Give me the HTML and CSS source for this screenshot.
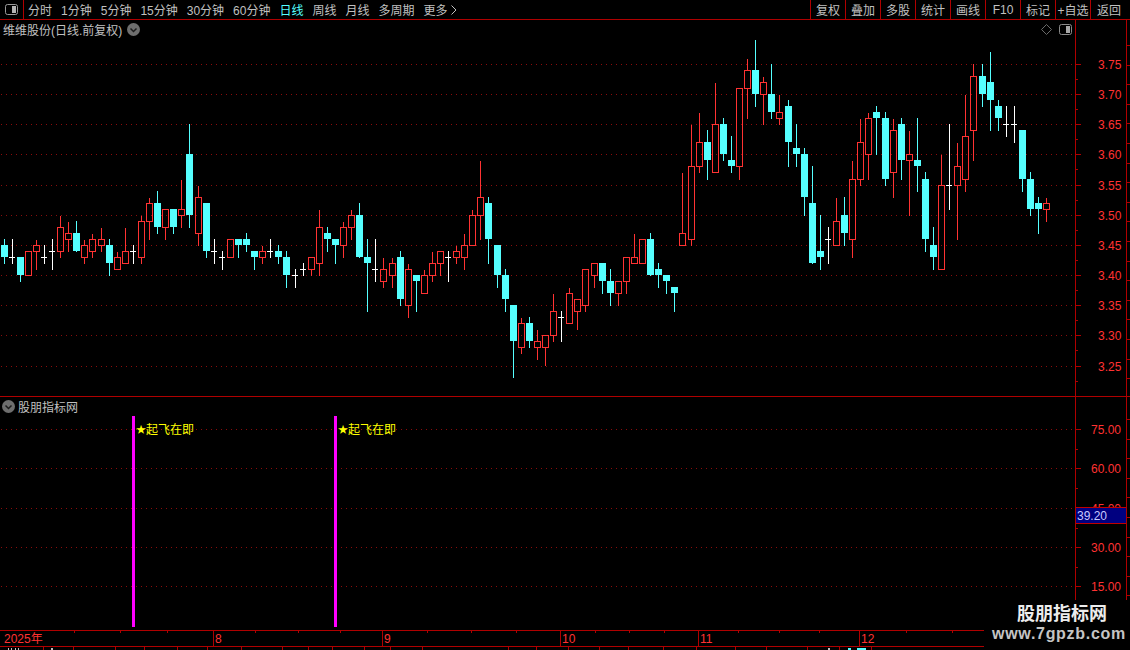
FILE: index.html
```html
<!DOCTYPE html>
<html lang="zh-CN">
<head>
<meta charset="utf-8">
<title>维维股份</title>
<link rel="stylesheet" href="styles.css">
</head>
<body>
<div class="app">
  <header class="toolbar">
    <button class="tool-icon" type="button" aria-label="布局">
      <svg width="13" height="11" viewBox="0 0 13 11"><rect x="0.5" y="0.5" width="12" height="10" rx="2" fill="none" stroke="#9a9a9a"/><rect x="7" y="2" width="4" height="7" fill="#b4b4b4"/></svg>
    </button>
    <nav class="periods">
      <span>分时</span><span>1分钟</span><span>5分钟</span><span>15分钟</span><span>30分钟</span><span>60分钟</span><span class="active">日线</span><span>周线</span><span>月线</span><span>多周期</span>
      <span class="more">更多<svg width="6" height="10" viewBox="0 0 6 10"><path d="M0.5 0.5L5 5L0.5 9.5" fill="none" stroke="#c0c0c0"/></svg></span>
    </nav>
    <div class="actions">
      <span>复权</span><span>叠加</span><span>多股</span><span>统计</span><span>画线</span><span>F10</span><span>标记</span><span>+自选</span><span class="last">返回</span>
    </div>
  </header>

  <section class="pane price-pane">
    <div class="plot">
      <div class="pane-title">
        <span>维维股份(日线.前复权)</span>
        <svg class="round-icon" width="13" height="13" viewBox="0 0 13 13"><circle cx="6.5" cy="6.5" r="6.5" fill="#6e6e6e"/><path d="M3.5 5.5L6.5 8.5L9.5 5.5" fill="none" stroke="#1c1c1c" stroke-width="1.5"/></svg>
      </div>
      <div class="pane-tools">
        <svg width="11" height="11" viewBox="0 0 11 11"><path d="M5.5 0.5L10.5 5.5L5.5 10.5L0.5 5.5Z" fill="none" stroke="#6a6a6a"/></svg>
        <svg width="13" height="11" viewBox="0 0 13 11"><rect x="0.5" y="0.5" width="12" height="10" rx="2" fill="none" stroke="#8a8a8a"/><rect x="7" y="2" width="4" height="7" fill="#a8a8a8"/></svg>
      </div>
    </div>
    <div class="axis"></div>
    <div class="strip"></div>
    <svg id="price-chart" class="canvas" viewBox="0 20 1130 377" width="1130" height="377"></svg>
  </section>

  <section class="pane indicator-pane">
    <div class="plot">
      <div class="pane-title">
        <svg class="round-icon first" width="13" height="13" viewBox="0 0 13 13"><circle cx="6.5" cy="6.5" r="6.5" fill="#6e6e6e"/><path d="M3.5 5.5L6.5 8.5L9.5 5.5" fill="none" stroke="#1c1c1c" stroke-width="1.5"/></svg>
        <span>股朋指标网</span>
      </div>
    </div>
    <div class="axis"></div>
    <div class="strip"></div>
    <svg id="indicator-chart" class="canvas" viewBox="0 397 1130 233" width="1130" height="233"></svg>
  </section>

  <footer class="timeline">
    <svg id="time-axis" class="time-svg" viewBox="0 630 1130 20" width="1130" height="20"></svg>
  </footer>

  <aside class="watermark">
    <div class="wm-name">股朋指标网</div>
    <div class="wm-url">www.7gpzb.com</div>
  </aside>
</div>
<script src="chart.js"></script>
</body>
</html>
```
FILE: styles.css
```css
* { box-sizing: border-box; }
html, body { margin: 0; padding: 0; background: #000; }
body {
  width: 1130px;
  height: 650px;
  overflow: hidden;
  font-family: "Liberation Sans", "Noto Sans CJK SC", sans-serif;
  font-size: 12px;
  color: #c0c0c0;
}
.app {
  position: relative;
  width: 1130px;
  height: 650px;
  display: flex;
  flex-direction: column;
  background: #000;
  overflow: hidden;
}
.toolbar {
  flex: none;
  height: 20px;
  display: flex;
  align-items: stretch;
  border-bottom: 1px solid #b00000;
}
.tool-icon {
  width: 24px;
  padding: 0;
  display: flex;
  align-items: center;
  justify-content: center;
  background: none;
  border: 0;
  border-right: 1px solid #b00000;
}
.periods {
  flex: 1;
  display: flex;
  align-items: center;
  gap: 9px;
  padding-left: 4px;
  white-space: nowrap;
}
.periods .active { color: #55ffff; }
.more { display: flex; align-items: center; gap: 3px; }
.actions { display: flex; align-items: stretch; width: 320px; }
.actions span {
  width: 35px;
  display: flex;
  align-items: center;
  justify-content: center;
  border-left: 1px solid #b00000;
  white-space: nowrap;
}
.actions .last { width: 40px; padding-right: 3px; }
.pane { position: relative; display: flex; }
.price-pane { flex: none; height: 377px; border-bottom: 1px solid #b00000; }
.indicator-pane { flex: none; height: 233px; }
.plot {
  width: 1075px;
  display: flex;
  justify-content: space-between;
  align-items: flex-start;
}
.axis { width: 51px; border-left: 1px solid #b00000; }
.strip { width: 4px; border-left: 1px solid #b00000; }
.pane-title {
  position: relative;
  z-index: 1;
  display: flex;
  align-items: center;
  gap: 5px;
  height: 18px;
  padding-left: 3px;
  white-space: nowrap;
}
.indicator-pane .pane-title { padding-left: 2px; gap: 3px; }
.pane-tools {
  position: relative;
  z-index: 1;
  display: flex;
  align-items: center;
  gap: 7px;
  height: 18px;
  padding-right: 3px;
}
.round-icon { display: block; }
.canvas { position: absolute; left: 0; top: 0; display: block; }
.timeline { flex: none; height: 20px; }
.time-svg { display: block; }
.watermark {
  position: absolute;
  right: 0;
  bottom: 0;
  width: 146px;
  height: 50px;
  background: #000;
  display: flex;
  flex-direction: column;
  align-items: center;
  padding-left: 4px;
}
.wm-name {
  font-family: "Noto Sans CJK SC", sans-serif;
  font-weight: 700;
  font-size: 18px;
  line-height: 25px;
  margin-left: 6px;
  color: #ececec;
}
.wm-url {
  font-family: "Liberation Sans", sans-serif;
  font-weight: 700;
  font-size: 16px;
  line-height: 18px;
  letter-spacing: 0.7px;
  color: #c4c4c4;
}
.label { font-family: "Liberation Sans", "Noto Sans CJK SC", sans-serif; font-size: 12px; }
.star { font-size: 10px; }
```
FILE: chart.js
```js
var NS = "http://www.w3.org/2000/svg";
var RED = "#ff3232", CYAN = "#55ffff", WHITE = "#ffffff", LINE = "#b00000", GRID = "#8a0c0c";

function el(svg, name, attrs, text) {
  var n = document.createElementNS(NS, name);
  for (var k in attrs) n.setAttribute(k, attrs[k]);
  if (text) n.textContent = text;
  svg.appendChild(n);
  return n;
}
function box(svg, x, y, w, h, fill) {
  el(svg, "rect", { x: x, y: y, width: w, height: h, fill: fill, "shape-rendering": "crispEdges" });
}
function label(svg, x, y, text, fill, cls) {
  el(svg, "text", { x: x, y: y, fill: fill, "class": "label" + (cls ? " " + cls : "") }, text);
}
function gridLine(svg, y, x2) {
  el(svg, "line", { x1: 1, x2: x2, y1: y + 0.5, y2: y + 0.5, stroke: GRID, "stroke-dasharray": "1 4", "shape-rendering": "crispEdges" });
}

/* Candles read as [centre x, type, high, top, bottom, low] in three sampled windows. */
var windows = [
  { ox: 0, oy: 180, rows: [
    [13,"c",177,195,231,249],[37,"w",177,231,231,249],[61,"c",231,231,285,303],[85,"r",213,213,287,287],
    [109,"r",180,196,214,267],[133,"w",195,231,231,249],[157,"w",177,213,213,267],[181,"r",108,142,214,231],
    [205,"r",126,160,178,213],[229,"c",123,159,213,213],[253,"r",180,196,232,249],[277,"r",162,178,214,231],
    [304,"r",144,178,196,213],[328,"c",177,195,249,285],[352,"r",216,232,268,268],[376,"r",144,214,250,250],
    [400,"w",195,213,213,249],[424,"r",108,124,232,249],[448,"r",54,70,124,177],[472,"c",33,69,141,159],
    [496,"r",88,88,142,177],[520,"c",87,87,141,159],[544,"r",0,88,106,141],[568,"c",-168,-78,105,141],
    [595,"r",18,52,160,195],[619,"c",69,69,213,231],[643,"w",177,213,213,249],[667,"w",213,231,231,267],
    [691,"r",178,178,232,232],[715,"c",177,177,195,231],[739,"c",159,177,195,213],[763,"c",213,213,231,267],
    [787,"r",198,214,232,249],[811,"w",177,213,213,231],[835,"c",195,213,231,249],[859,"c",213,231,285,321],
    [886,"w",267,285,285,321],[910,"w",249,267,267,285],[934,"r",232,232,268,285],[958,"r",90,142,250,285],
    [982,"c",141,159,177,213],[1006,"c",177,177,195,249],[1030,"r",126,142,196,231]
  ]},
  { ox: 340, oy: 150, rows: [
    [34,"r",180,196,232,267],[58,"c",159,195,321,321],[82,"c",267,321,339,483],[106,"w",267,357,357,393],
    [130,"r",324,358,394,411],[157,"r",324,340,376,411],[181,"c",303,321,447,465],[205,"r",342,358,466,501],
    [229,"c",375,375,393,483],[253,"r",360,376,430,430],[277,"r",306,340,376,393],[301,"r",304,304,340,375],
    [325,"w",303,321,321,393],[349,"r",288,304,322,339],[373,"r",252,286,322,357],[397,"r",180,196,286,286],
    [421,"r",33,142,196,267],[445,"c",141,159,267,339],[472,"c",285,285,375,411],[496,"c",357,375,447,483],
    [520,"c",465,465,573,681],[544,"r",504,520,592,609],[568,"c",501,519,573,591],[592,"r",540,574,592,627],
    [616,"r",556,556,592,645],[640,"r",432,484,556,573],[664,"w",483,501,501,573],[688,"r",414,430,520,520],
    [712,"r",448,448,484,537],[736,"r",358,358,466,483],[763,"r",340,340,376,411],[787,"c",339,339,393,429],
    [811,"c",357,393,429,465],[835,"r",394,394,430,465],[859,"r",322,322,394,429],[883,"r",252,322,340,340],
    [907,"r",268,268,340,340],[931,"c",249,267,375,375],[955,"c",339,357,375,411],[979,"c",375,375,393,429],
    [1003,"c",411,411,429,483]
  ]},
  { ox: 670, oy: 30, rows: [
    [37,"r",430,610,646,646],[64,"r",286,409,628,645],[88,"r",250,337,409,426],[112,"c",300,336,390,447],
    [136,"r",160,283,428,428],[160,"c",264,282,372,390],[184,"c",318,390,408,426],[208,"r",175,175,409,447],
    [232,"r",87,121,175,264],[256,"c",30,120,192,228],[280,"r",141,157,193,282],[304,"c",102,192,246,264],
    [328,"r",195,247,265,282],[355,"c",210,228,336,408],[379,"c",282,354,372,408],[403,"c",354,372,501,555],
    [427,"c",408,519,699,699],[451,"c",555,663,681,717],[475,"w",591,628,628,699],[499,"r",504,574,646,646],
    [523,"c",501,555,609,645],[547,"r",393,448,628,681],[571,"r",267,337,449,465],[595,"r",249,265,373,447],
    [619,"c",228,246,264,372],[646,"c",246,264,447,465],[670,"r",267,301,428,501],[694,"c",264,282,390,447],
    [718,"r",303,373,391,555],[742,"c",264,390,408,483],[766,"c",426,447,627,663],[790,"c",591,645,681,717],
    [814,"r",375,466,718,718],[838,"w",282,466,466,537],[862,"r",339,409,466,627],[886,"r",195,319,449,483],
    [910,"r",103,139,301,390],[937,"c",102,138,192,228],[961,"c",66,156,210,300],[985,"c",210,228,264,300],
    [1009,"w",228,283,283,318],[1033,"w",228,283,283,336],[1057,"c",300,300,447,483],[1081,"c",426,447,537,555],
    [1105,"c",501,519,537,609],[1129,"r",504,520,538,573]
  ]}
];

function drawCandle(svg, x, kind, hi, top, bot, lo) {
  if (kind === "w") {
    box(svg, x, hi, 1, lo - hi + 1, WHITE);
    box(svg, x - 3, top, 6, 1, WHITE);
  } else if (kind === "c") {
    box(svg, x, hi, 1, lo - hi + 1, CYAN);
    box(svg, x - 3, top, 7, bot - top, CYAN);
  } else {
    if (top > hi) box(svg, x, hi, 1, top - hi, RED);
    if (lo > bot) box(svg, x, bot, 1, lo - bot + 1, RED);
    box(svg, x - 3, top, 7, 1, RED);
    box(svg, x - 3, bot, 7, 1, RED);
    box(svg, x - 3, top, 1, bot - top + 1, RED);
    box(svg, x + 3, top, 1, bot - top + 1, RED);
  }
}

/* Price pane */
var price = document.getElementById("price-chart");
var prices = ["3.75","3.70","3.65","3.60","3.55","3.50","3.45","3.40","3.35","3.30","3.25"];
var priceY = [64,94,124,154,185,215,245,275,305,335,366];
priceY.forEach(function (y, i) {
  gridLine(price, y, 1075);
  box(price, 1075, y, 6, 1, LINE);
  box(price, 1075, y + 15, 3, 1, LINE);
  label(price, 1098, y + 5, prices[i], RED);
});
windows.forEach(function (w) {
  w.rows.forEach(function (r) {
    var f = function (v) { return Math.floor(v / 3) + w.oy; };
    drawCandle(price, Math.floor(r[0] / 3) + w.ox, r[1], f(r[2]), f(r[3]), f(r[4]), f(r[5]));
  });
});
for (var s = 45; s < 397; s += 19.6) box(price, 1126, Math.round(s), 4, 1, LINE);

/* Indicator pane */
var ind = document.getElementById("indicator-chart");
var levels = [["75.00",429],["60.00",468],["45.00",508],["30.00",547],["15.00",586]];
levels.forEach(function (l) {
  gridLine(ind, l[1], 1075);
  box(ind, 1075, l[1], 6, 1, LINE);
  box(ind, 1075, l[1] + 20, 3, 1, LINE);
  label(ind, 1091, l[1] + 5, l[0], RED);
});
[132, 334].forEach(function (x) {
  box(ind, x, 416, 3, 211, "#ff00ff");
  label(ind, x + 4, 433, "★", "#ffff00", "star");
  label(ind, x + 14, 434, "起飞在即", "#ffff00");
});
box(ind, 1076, 507, 50, 17, "#000080");
box(ind, 1076, 507, 50, 1, "#c00000");
box(ind, 1076, 523, 50, 1, "#c00000");
label(ind, 1077, 520, "39.20", "#c8c8ff");
for (var t = 419; t < 600; t += 19.6) box(ind, 1126, Math.round(t), 4, 1, LINE);

/* Time axis */
var time = document.getElementById("time-axis");
box(time, 0, 630, 984, 1, LINE);
box(time, 0, 646, 984, 1, LINE);
[[4,"2025年"],[215,"8"],[384,"9"],[562,"10"],[700,"11"],[861,"12"]].forEach(function (m) {
  label(time, m[0], 643, m[1], RED);
});
[213,382,560,698,859].forEach(function (x) { box(time, x, 630, 1, 16, LINE); });
[74,120,167,255,298,340,427,471,516,595,629,664,738,779,819,906,952].forEach(function (x) {
  box(time, x, 631, 1, 2, LINE);
});
[43,73,115,144,177,207,241,282,308,332,364,390,422,508,536,568,599,628,663,696,735,766,807,839,871].forEach(function (x) {
  box(time, x, 647, 1, 3, LINE);
});
[[8,1],[11,1],[15,1],[18,1],[51,2]].forEach(function (p) { box(time, p[0], 648, p[1], 2, "#c0c0c0"); });
box(time, 828, 648, 2, 2, "#c0c0c0");
box(time, 848, 648, 3, 2, CYAN);
box(time, 857, 648, 9, 2, CYAN);
```
